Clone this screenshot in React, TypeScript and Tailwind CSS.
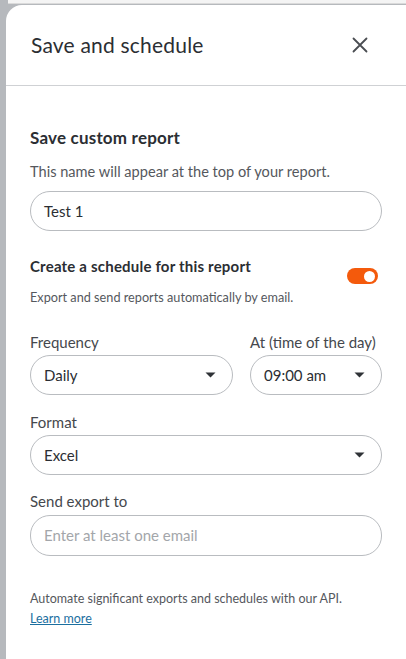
import React from 'react';

function Caret() {
    return (
        <svg width="11" height="6" viewBox="0 0 11 6" className="shrink-0">
            <path d="M0.5 0.5 L10.5 0.5 L5.5 5.5 Z" fill="#2f3237" />
        </svg>
    );
}

function Select({ value, className }: { value: string; className?: string }) {
    return (
        <div
            className={`flex items-center justify-between h-[40px] rounded-[20px] border border-[#b9bcc0] pl-[13px] pr-[16px] text-[15px] text-[#2b2e33] ${className ?? ''}`}
        >
            <span>{value}</span>
            <Caret />
        </div>
    );
}

export default function App() {
    return (
        <div
            className="w-[406px] h-[659px] bg-[#b6b9bd] flex flex-col overflow-hidden"
            style={{ fontFamily: 'Lato, "Liberation Sans", sans-serif' }}
        >
            <div className="h-[4px] ml-[8px] bg-[#f4f4f4] border-b border-[#dadada] shrink-0" />
            <div className="flex-1 ml-[6px] mt-px bg-white rounded-tl-[16px] flex flex-col">
                <div className="flex items-center justify-between h-[81px] pl-[25px] pr-[38px] border-b border-[#cfd1d4]">
                    <h1 className="text-[21px] text-[#2b2e33] tracking-[0.2px]">Save and schedule</h1>
                    <svg width="16" height="16" viewBox="0 0 16 16">
                        <path d="M1.5 1.5 L14.5 14.5 M14.5 1.5 L1.5 14.5" stroke="#4a4d52" strokeWidth="1.8" strokeLinecap="round" />
                    </svg>
                </div>

                <div className="pl-[24px] pr-[24px] flex flex-col">
                    <h2 className="mt-[42px] text-[17px] font-bold text-[#2b2e33] leading-[20px] tracking-[0.2px]">
                        Save custom report
                    </h2>
                    <p className="mt-[15px] text-[14.6px] text-[#55585d] leading-[18px]">
                        This name will appear at the top of your report.
                    </p>
                    <div className="mt-[10px] h-[40px] rounded-[20px] border border-[#b9bcc0] pl-[13px] flex items-center text-[15px] text-[#2b2e33]">
                        Test 1
                    </div>

                    <div className="mt-[26px] flex justify-between">
                        <div>
                            <h3 className="text-[15px] font-bold text-[#2b2e33] leading-[18px] tracking-[0.2px]">
                                Create a schedule for this report
                            </h3>
                            <p className="mt-[14px] text-[12.7px] text-[#55585d] leading-[16px]">
                                Export and send reports automatically by email.
                            </p>
                        </div>
                        <div className="mt-[11px] mr-[4px] w-[31px] h-[16px] rounded-full bg-[#f45a0c] flex items-center justify-end pr-[3px]">
                            <div className="w-[11px] h-[11px] rounded-full bg-white" />
                        </div>
                    </div>

                    <div className="mt-[27px] flex gap-[17px]">
                        <div className="flex-1 flex flex-col">
                            <label className="text-[15px] text-[#45484d] leading-[20px]">Frequency</label>
                            <Select value="Daily" className="mt-[3px]" />
                        </div>
                        <div className="w-[132px] flex flex-col">
                            <label className="text-[15px] text-[#45484d] leading-[20px] whitespace-nowrap">At (time of the day)</label>
                            <Select value="09:00 am" className="mt-[3px]" />
                        </div>
                    </div>

                    <label className="mt-[17px] text-[15px] text-[#45484d] leading-[20px]">Format</label>
                    <Select value="Excel" className="mt-[3px]" />

                    <label className="mt-[16px] text-[15px] text-[#45484d] leading-[20px]">Send export to</label>
                    <div className="mt-[4px] h-[41px] rounded-[20px] border border-[#b9bcc0] pl-[13px] flex items-center text-[15px] text-[#a3a6aa]">
                        Enter at least one email
                    </div>

                    <p className="mt-[33px] text-[12.5px] text-[#55585d] leading-[20px]">
                        Automate significant exports and schedules with our API.
                    </p>
                    <a className="text-[12.5px] text-[#1b6f9f] underline leading-[20px] w-fit">Learn more</a>
                </div>
            </div>
        </div>
    );
}
